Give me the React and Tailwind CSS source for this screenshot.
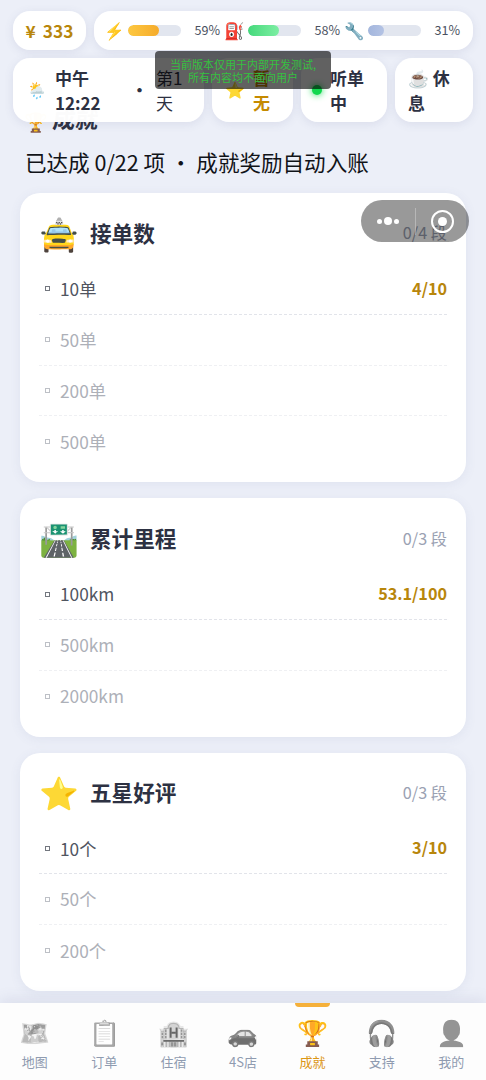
const groups = [
  { icon: '🚖', title: '接单数', stage: '0/4 段', progress: '4/10', goals: ['10单', '50单', '200单', '500单'] },
  { icon: '🛣️', title: '累计里程', stage: '0/3 段', progress: '53.1/100', goals: ['100km', '500km', '2000km'] },
  { icon: '⭐', title: '五星好评', stage: '0/3 段', progress: '3/10', goals: ['10个', '50个', '200个'] },
]

const tabs = [
  { icon: '🗺️', label: '地图' },
  { icon: '📋', label: '订单' },
  { icon: '🏨', label: '住宿' },
  { icon: '🚗', label: '4S店' },
  { icon: '🏆', label: '成就', active: true },
  { icon: '🎧', label: '支持' },
  { icon: '👤', label: '我的' },
]

const pill = 'rounded-[17px] bg-white/98 shadow-[0_2px_10px_rgba(80,90,140,0.12)]'

function Meter({ icon, value, fill }) {
  return (
    <div className="flex items-center">
      <span className="-ml-[2px] w-[24px] text-[16.5px] leading-none">{icon}</span>
      <div className="h-[11px] w-[53px] overflow-hidden rounded-full bg-[#e2e6ef]">
        <div className={`h-full rounded-full ${fill}`} style={{ width: `${value}%` }} />
      </div>
      <span className="w-[39px] text-right text-[12.6px] text-[#4a5160]">{value}%</span>
    </div>
  )
}

function StatusHeader() {
  return (
    <header className="absolute inset-x-0 top-0 z-10 px-[13px] pt-[11px]">
      <div className="flex gap-2">
        <div className={`${pill} flex h-[39px] w-[73px] items-center justify-center gap-[7px] text-[17.3px] font-bold text-[#b8860b]`}>
          <span>¥</span>
          <span>333</span>
        </div>
        <div className={`${pill} flex h-[39px] flex-1 items-center justify-between pr-[13px] pl-3`}>
          <Meter icon="⚡" value={59} fill="bg-linear-to-r from-[#fdc840] to-[#f5ab2b]" />
          <Meter icon="⛽" value={58} fill="bg-linear-to-r from-[#43d97b] to-[#7ceea3]" />
          <Meter icon="🔧" value={31} fill="bg-linear-to-r from-[#a3b6dd] to-[#b4c3e4]" />
        </div>
      </div>
      <div className="mt-2 flex gap-2 text-[17px] leading-[25.5px] font-bold text-[#2d3142]">
        <div className={`${pill} flex h-[64px] w-[191px] items-center pl-[14px]`}>
          <span className="w-[28px] text-[16px]">🌦️</span>
          <span className="w-[75px]">中午<br />12:22</span>
          <span className="w-[26px] pl-[1px]">·</span>
          <span className="font-normal">第1<br />天</span>
        </div>
        <div className={`${pill} flex h-[64px] w-[81px] items-center pl-[13px] text-[#c58a00]`}>
          <span className="w-[28px] text-[16px]">⭐</span>
          <span>暂<br />无</span>
        </div>
        <div className={`${pill} flex h-[64px] w-[86px] items-center gap-[8px] pl-[11px]`}>
          <span className="h-[10px] w-[10px] rounded-full bg-[#10d84e] shadow-[0_0_7px_#10d84e]" />
          <span>听单<br />中</span>
        </div>
        <div className={`${pill} flex h-[64px] w-[78px] items-center pl-[13px]`}>
          <span>☕ 休<br />息</span>
        </div>
      </div>
    </header>
  )
}

function AchievementCard({ icon, title, stage, progress, goals }) {
  return (
    <section className="rounded-[20px] bg-white px-[19px] pb-[15px] shadow-[0_2px_12px_rgba(80,90,140,0.08)]">
      <div className="flex h-[71px] items-center pt-[9px]">
        <span className="w-[51px] pb-[3px] text-[32px] leading-none">{icon}</span>
        <h2 className="flex-1 text-[21.6px] font-bold text-[#2d3142]">{title}</h2>
        <span className="pb-[1px] text-[16.2px] text-[#9aa1b2]">{stage}</span>
      </div>
      {goals.map((goal, i) => (
        <div
          key={goal}
          className={`flex h-[50.8px] items-center border-dashed pl-[6px] ${i < goals.length - 1 ? 'border-b' : ''} ${i === 0 ? 'border-[#e2e4ea] text-[#50555f]' : 'border-[#eff0f3] text-[#adb0b8]'}`}
        >
          <span className="mr-[10px] h-[5px] w-[5px] border border-current opacity-80" />
          <span className="flex-1 text-[17.3px]">{goal}</span>
          {i === 0 && <span className="pb-[2px] text-[16.2px] font-bold text-[#b8860b]">{progress}</span>}
        </div>
      ))}
    </section>
  )
}

function MiniProgramCapsule() {
  return (
    <div className="absolute top-[200px] left-[361px] z-20 flex h-[42px] w-[108px] items-center rounded-full bg-black/40">
      <div className="flex flex-1 items-center justify-center gap-[2px] pr-px">
        <i className="h-[5px] w-[5px] rounded-full bg-white" />
        <i className="h-[8px] w-[8px] rounded-full bg-white" />
        <i className="h-[5px] w-[5px] rounded-full bg-white" />
      </div>
      <div className="h-[27px] w-px bg-white/30" />
      <div className="flex flex-1 justify-center">
        <div className="grid h-[23px] w-[23px] place-items-center rounded-full border-2 border-white">
          <i className="h-[9px] w-[9px] rounded-full bg-white" />
        </div>
      </div>
    </div>
  )
}

function TabBar() {
  return (
    <nav className="absolute inset-x-0 bottom-0 z-10 grid h-[77px] grid-cols-7 bg-[#fdfdfd] shadow-[0_-3px_14px_rgba(80,90,140,0.12)]">
      {tabs.map((tab) => (
        <div key={tab.label} className="flex flex-col items-center">
          <div className={`h-[4px] w-[35px] rounded-b-full ${tab.active ? 'bg-[#f5b03a]' : ''}`} />
          <span className={`mt-[9px] text-[25px] leading-[30px] ${tab.active ? '' : 'opacity-70 grayscale'}`}>{tab.icon}</span>
          <span className={`mt-[6px] text-[13px] leading-5 ${tab.active ? 'text-[#dc9614]' : 'text-[#8f9bb0]'}`}>{tab.label}</span>
        </div>
      ))}
    </nav>
  )
}

export default function App() {
  return (
    <div className="relative h-[1080px] w-[486px] overflow-hidden bg-[#eceff8] font-['Noto_Sans_CJK_SC','Noto_Sans',sans-serif]">
      <StatusHeader />
      <div className="absolute top-[51px] left-[155px] z-20 h-[38px] w-[176px] rounded-[4px] bg-black/62 pt-[7px] text-center text-[11px] leading-[13px] text-[#35c040]">
        当前版本仅用于内部开发测试,<br />所有内容均不面向用户
      </div>
      <MiniProgramCapsule />

      <main className="px-5 pt-[103px]">
        <h1 className="flex h-[32px] items-center gap-[6px] pl-[4px] text-[22.6px] leading-none font-bold text-[#2d3142]">
          <span className="w-[23px] pt-[2px] text-[19px]">🏆</span>
          <span className="-skew-x-6">成就</span>
        </h1>
        <p className="flex h-[58px] items-center pb-[3px] pl-[5px] text-[21.55px] text-[#111318]">已达成 0/22 项 ・ 成就奖励自动入账</p>
        <div className="flex flex-col gap-4">
          {groups.map((group) => (
            <AchievementCard key={group.title} {...group} />
          ))}
        </div>
      </main>
      <TabBar />
    </div>
  )
}
